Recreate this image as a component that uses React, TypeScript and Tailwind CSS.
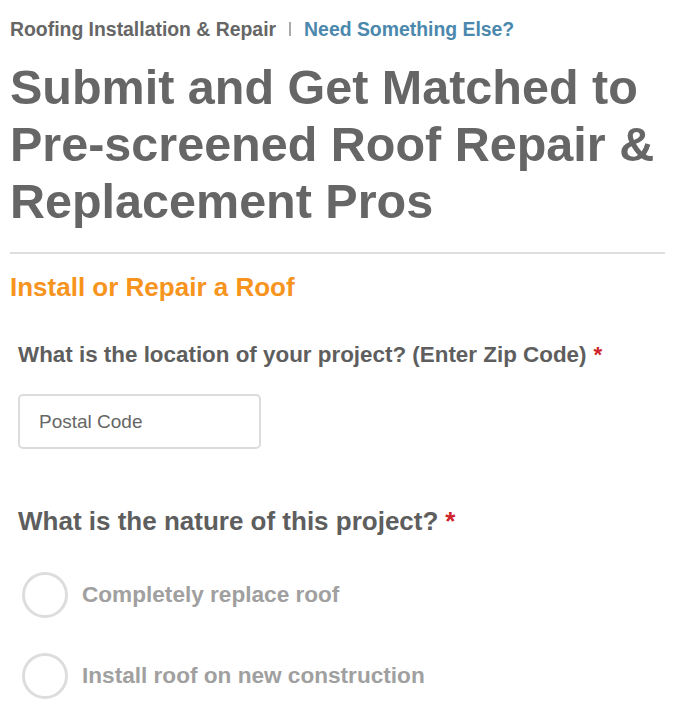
import { useState } from "react";

const options = ["Completely replace roof", "Install roof on new construction"];

export default function App() {
  const [zip, setZip] = useState("");
  const [choice, setChoice] = useState<string | null>(null);

  return (
    <div className="min-h-screen bg-white font-['Liberation_Sans',Arial,sans-serif] px-[10px] pt-[17px]">
      <div className="flex items-center text-[19.4px] font-bold leading-[24px]">
        <span className="text-[#666]">Roofing Installation &amp; Repair</span>
        <span className="mx-[13px] h-[14px] w-[2px] bg-[#aaa]" />
        <a href="#" className="text-[#4b88ad]">Need Something Else?</a>
      </div>

      <h1 className="mt-[18px] text-[48.5px] font-bold leading-[57px] text-[#666]">
        Submit and Get Matched to Pre-screened Roof Repair &amp; Replacement Pros
      </h1>

      <div className="mt-[22px] h-[2px] w-[655px] bg-[#dedede]" />

      <h2 className="mt-[17px] text-[26px] font-bold leading-[32px] text-[#f7941d]">
        Install or Repair a Roof
      </h2>

      <form className="px-[8px]" onSubmit={(e) => e.preventDefault()}>
        <label className="mt-[38px] block text-[22.4px] font-bold leading-[28px] text-[#5e5e5e]">
          What is the location of your project? (Enter Zip Code)
          <span className="ml-[7px] text-[#d0232a]">*</span>
        </label>

        <input
          type="text"
          placeholder="Postal Code"
          value={zip}
          onChange={(e) => setZip(e.target.value)}
          className="mt-[25px] block h-[55px] w-[243px] rounded-[5px] border-2 border-[#dcdcdc] px-[19px] text-[19px] text-[#555] placeholder:text-[#666] outline-none"
        />

        <p className="mt-[56px] text-[26px] font-bold leading-[32px] text-[#5e5e5e]">
          What is the nature of this project?
          <span className="ml-[7px] text-[#d0232a]">*</span>
        </p>

        <div className="mt-[35px] flex flex-col gap-[35px]">
          {options.map((o) => (
            <label key={o} className="flex cursor-pointer items-center gap-[14px]" onClick={() => setChoice(o)}>
              <span className="ml-[4px] flex h-[46px] w-[46px] items-center justify-center rounded-full border-[3px] border-[#dddddd]">
                {choice === o && <span className="h-[22px] w-[22px] rounded-full bg-[#f7941d]" />}
              </span>
              <span className="text-[22.6px] font-bold leading-[28px] text-[#a0a0a0]">{o}</span>
            </label>
          ))}
        </div>
      </form>
    </div>
  );
}
